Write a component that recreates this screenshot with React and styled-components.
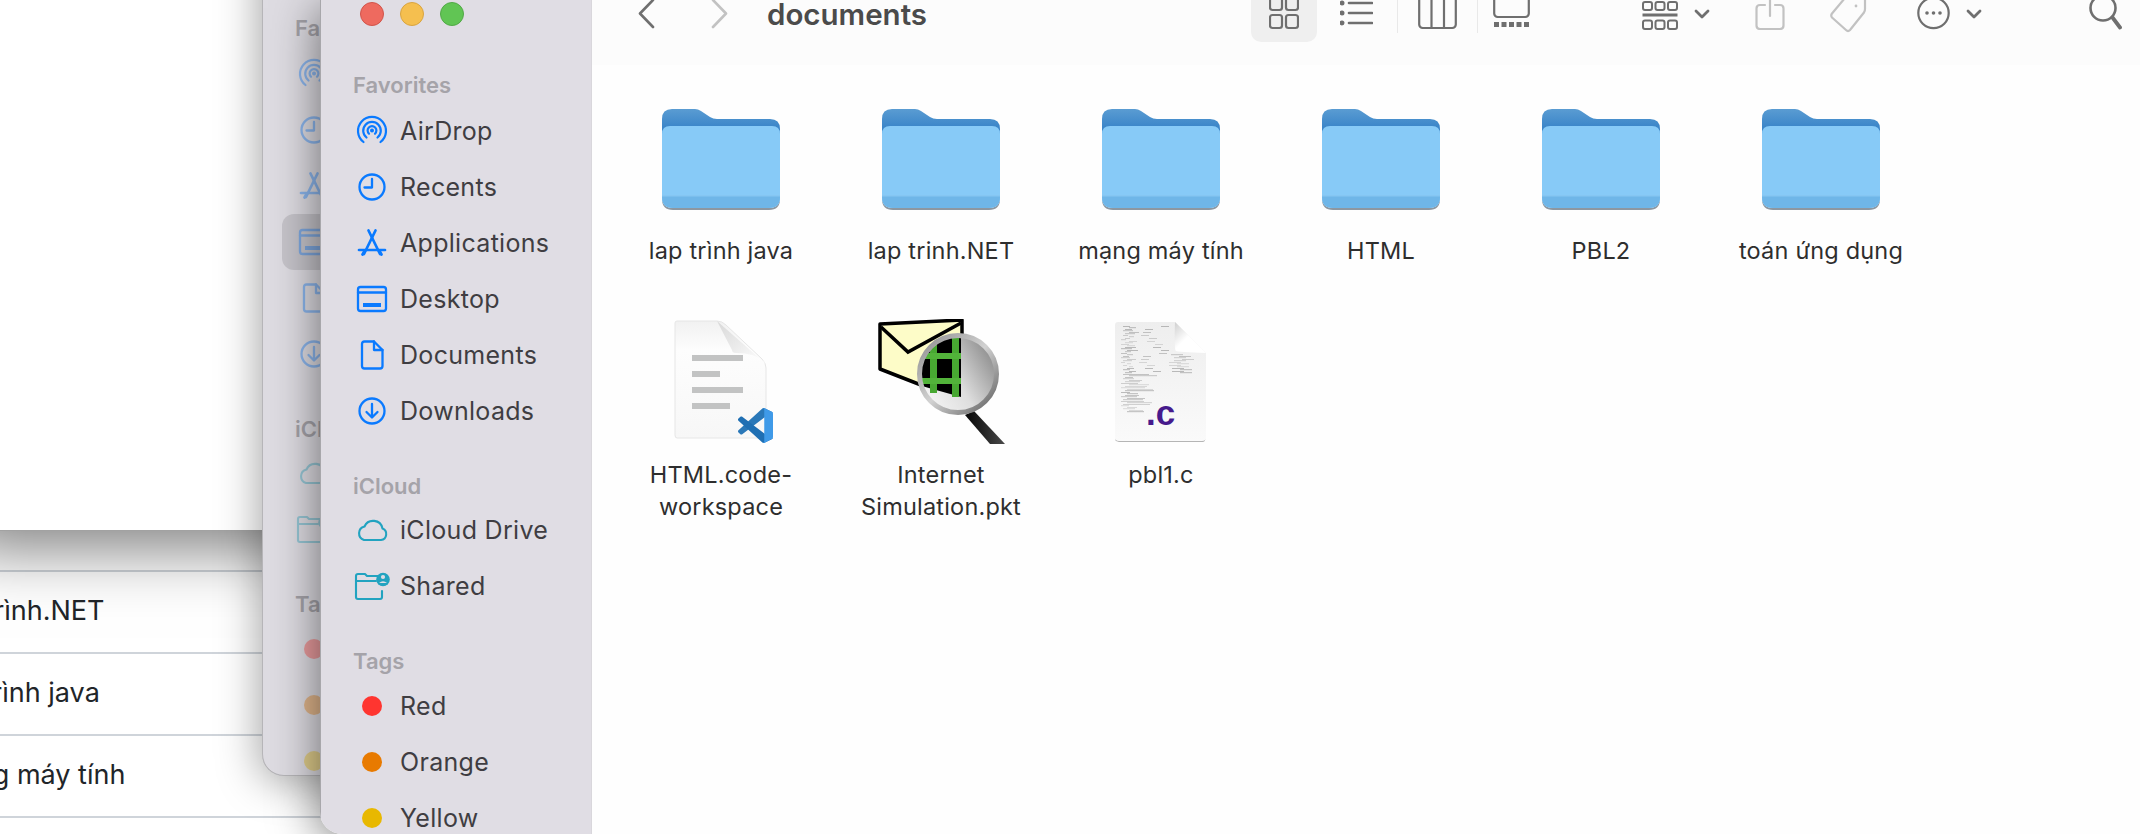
import React from 'react';
import styled, { createGlobalStyle } from 'styled-components';

const Global = createGlobalStyle`
  html, body { margin: 0; padding: 0; background: #fff; }
  body { font-family: Inter, "Noto Sans", "Liberation Sans", sans-serif; }
`;

const Desktop = styled.div`
  position: relative;
  width: 2140px;
  height: 834px;
  overflow: hidden;
  background: #fff;
`;

const TableWindow = styled.div`
  position: absolute;
  left: -300px;
  top: 500px;
  width: 1000px;
  height: 400px;
  background: #fff;
  padding-top: 70px;
  box-sizing: border-box;
`;

const TableRow = styled.div`
  height: 82px;
  box-sizing: border-box;
  border-top: 2px solid #cfd4da;
  display: flex;
  align-items: center;
  padding: 0 0 3px ${p => p.$indent}px;
  font-size: 27px;
  color: #212529;
`;

const PreviewWindow = styled.div`
  position: absolute;
  left: -40px;
  top: -40px;
  width: 400px;
  height: 570px;
  background: #fff;
  border-bottom: 1px solid #a2a2a2;
  box-shadow: 0 18px 60px rgba(0, 0, 0, 0.5);
`;

const BackWindow = styled.div`
  position: absolute;
  left: 262px;
  top: -57px;
  width: 320px;
  height: 833px;
  background: #dedce2;
  border-radius: 0 0 0 22px;
  box-sizing: border-box;
  box-shadow: inset 1px 0 0 #b6b5b8, inset 0 -1px 0 #b6b5b8, -4px 6px 42px rgba(0, 0, 0, 0.34);
`;

const FrontWindow = styled.div`
  position: absolute;
  left: 320px;
  top: 0;
  width: 1900px;
  height: 834px;
  display: flex;
  border-radius: 0 0 0 22px;
  overflow: hidden;
`;

const FrontShadow = styled.div`
  position: absolute;
  left: 320px;
  top: 0;
  width: 1900px;
  height: 834px;
  border-radius: 0 0 0 22px;
  box-shadow: -2px 8px 46px rgba(0, 0, 0, 0.5);
`;

const SidebarPane = styled.aside`
  width: 271px;
  flex: none;
  height: 100%;
  background: #e0dde4;
  box-shadow: inset 1px 0 0 #a8a7ab;
  color: #3f3d42;
`;

const Titlebar = styled.div`
  height: 38px;
  display: flex;
  gap: 16px;
  padding: 2px 0 0 40px;
  box-sizing: border-box;
`;

const Light = styled.span`
  width: 24px;
  height: 24px;
  border-radius: 50%;
  box-sizing: border-box;
  background: ${p => p.$fill};
  border: 1px solid ${p => p.$edge};
`;

const Section = styled.div`
  height: ${p => p.$h}px;
  box-sizing: border-box;
  padding: 35px 0 0 33px;
  font-size: 22px;
  line-height: 24px;
  font-weight: 600;
  color: #a5a3a9;
  overflow: hidden;
`;

const Spacer = styled.div`
  height: ${p => p.$h}px;
`;

const Item = styled.div`
  height: 56px;
  display: flex;
  align-items: center;
  margin-left: 20px;
  padding-left: 12px;
  border-radius: 12px;
  background: ${p => (p.$selected ? '#c6c4ca' : 'transparent')};
  font-size: 25px;
  letter-spacing: 0.3px;
  white-space: nowrap;
`;

const ItemIcon = styled.span`
  width: 40px;
  height: 32px;
  margin-right: 8px;
  flex: none;
  display: flex;
  align-items: center;
  justify-content: center;
  opacity: ${p => (p.$dim ? 0.38 : 1)};
`;

const ItemText = styled.span`
  opacity: ${p => (p.$dim ? 0.38 : 1)};
`;

const TagDot = styled.span`
  width: 20px;
  height: 20px;
  border-radius: 50%;
  background: ${p => p.$color};
`;

const Main = styled.main`
  width: 1549px;
  flex: none;
  height: 100%;
  background: #fefefe;
  border-left: 1px solid #d9d7dc;
  box-sizing: border-box;
`;

const Toolbar = styled.header`
  height: 65px;
  display: flex;
  align-items: flex-start;
  background: #fcfcfc;
  color: #6f6f6f;
`;

const Tool = styled.span`
  display: block;
  flex: none;
  margin-left: ${p => p.$ml}px;
  color: ${p => (p.$off ? '#c2c2c2' : '#6f6f6f')};
  height: ${p => p.$h || 30}px;
  svg { display: block; overflow: hidden; }
`;

const Title = styled.h1`
  margin: 0 0 0 39px;
  width: 161px;
  flex: none;
  font-size: 29.5px;
  line-height: 28px;
  font-weight: 600;
  color: #4b4b4b;
  white-space: nowrap;
`;

const ActiveView = styled.span`
  margin-left: 323px;
  width: 66px;
  height: 42px;
  flex: none;
  display: flex;
  justify-content: center;
  background: #efefef;
  border-radius: 0 0 10px 10px;
`;

const Divider = styled.span`
  width: 1px;
  height: 33px;
  flex: none;
  margin-left: ${p => p.$ml}px;
  background: #e9e9e9;
`;

const FileGrid = styled.section`
  display: grid;
  grid-template-columns: repeat(6, 220px);
  grid-auto-rows: 224px;
  padding: 29px 0 0 19px;
`;

const FileCell = styled.div`
  display: flex;
  flex-direction: column;
  align-items: center;
`;

const FileIcon = styled.div`
  height: 128px;
  display: flex;
  align-items: center;
  justify-content: center;
  svg { display: block; }
`;

const FileName = styled.div`
  margin-top: 13px;
  width: 200px;
  text-align: center;
  font-size: 23.5px;
  line-height: 32px;
  letter-spacing: 0.2px;
  color: #2e2e2e;
`;

const blue = '#0a7aff';
const teal = '#22a3c0';

const Ic = ({ children, color = blue, sw = 2.3 }) => (
  <svg width="32" height="32" viewBox="0 0 32 32" fill="none" stroke={color} strokeWidth={sw} strokeLinecap="round" strokeLinejoin="round">
    {children}
  </svg>
);

const AirDropIcon = () => (
  <Ic sw={2.2}>
    <path d="M7.5 27 A14 14 0 1 1 24.5 27" />
    <path d="M10.5 22.5 A8.8 8.8 0 1 1 21.5 22.5" />
    <path d="M13 18.7 A4.4 4.4 0 1 1 19 18.7" />
    <circle cx="16" cy="15.5" r="2" fill={blue} stroke="none" />
  </Ic>
);
const RecentsIcon = () => (
  <Ic>
    <circle cx="16" cy="16" r="12.5" />
    <path d="M16 8 V16.5 H8.5" />
  </Ic>
);
const AppsIcon = () => (
  <Ic sw={2.7}>
    <path d="M12.5 3.5 L24 27" />
    <path d="M19.5 3.5 L8 27" />
    <path d="M3 23 H29" />
    <path d="M6.5 27.5 L8.5 24" />
    <path d="M25.5 27.5 L23.5 24" />
  </Ic>
);
const DesktopIcon = () => (
  <Ic>
    <rect x="2" y="4" width="28" height="24" rx="2.5" />
    <path d="M2 9.5 H30" />
    <rect x="7" y="20" width="18" height="4" fill={blue} stroke="none" />
  </Ic>
);
const DocumentIcon = () => (
  <Ic>
    <path d="M6 5 Q6 2.5 8.5 2.5 H18 L26.500 11 V27 Q26.500 29.500 24 29.500 H8.500 Q6 29.500 6 27 Z" />
    <path d="M18 2.500 V11 H26.500" />
  </Ic>
);
const DownloadIcon = () => (
  <Ic>
    <circle cx="16" cy="16" r="12.5" />
    <path d="M16 9 V22 M10.500 17 L16 22.500 L21.500 17" />
  </Ic>
);
const CloudIcon = () => (
  <Ic color={teal} sw={2.1}>
    <path d="M8 26 H25 A6 6 0 0 0 26.500 14.500 A9.500 9.500 0 0 0 8.500 12.500 A7 7 0 0 0 8 26 Z" />
  </Ic>
);
const SharedIcon = () => (
  <svg width="36" height="32" viewBox="0 0 36 32" fill="none" stroke={teal} strokeWidth="2.1" strokeLinecap="round" strokeLinejoin="round">
    <path d="M24 6 H13 L11 4 H4 Q2 4 2 6 V27 Q2 29 4 29 H26 Q28 29 28 27 V21" />
    <path d="M2 11 H22" />
    <circle cx="29" cy="9.500" r="6.800" fill={teal} stroke="none" />
    <circle cx="29" cy="7" r="2.100" fill="#e0dde4" stroke="none" />
    <path d="M25 13 Q29 9.500 33 13 Z" fill="#e0dde4" stroke="none" />
  </svg>
);

const favorites = [
  ['AirDrop', AirDropIcon],
  ['Recents', RecentsIcon],
  ['Applications', AppsIcon],
  ['Desktop', DesktopIcon],
  ['Documents', DocumentIcon],
  ['Downloads', DownloadIcon],
];
const cloud = [
  ['iCloud Drive', CloudIcon],
  ['Shared', SharedIcon],
];
const tags = [
  ['Red', '#ff3530'],
  ['Orange', '#e87a00'],
  ['Yellow', '#e8b800'],
];

const Sidebar = ({ dim, selected }) => (
  <>
    <Section $h={65}>Favorites</Section>
    {favorites.map(([label, Icon]) => (
      <Item key={label} $selected={selected === label}>
        <ItemIcon $dim={dim}><Icon /></ItemIcon>
        <ItemText $dim={dim}>{label}</ItemText>
      </Item>
    ))}
    <Section $h={63}>iCloud</Section>
    {cloud.map(([label, Icon]) => (
      <Item key={label}>
        <ItemIcon $dim={dim}><Icon /></ItemIcon>
        <ItemText $dim={dim}>{label}</ItemText>
      </Item>
    ))}
    <Section $h={64}>Tags</Section>
    {tags.map(([label, color]) => (
      <Item key={label}>
        <ItemIcon $dim={dim}><TagDot $color={color} /></ItemIcon>
        <ItemText $dim={dim}>{label}</ItemText>
      </Item>
    ))}
  </>
);

const Stroke = ({ w, h, sw = 2.2, children }) => (
  <svg width={w} height={h} viewBox={`0 0 ${w} ${h}`} fill="none" stroke="currentColor" strokeWidth={sw} strokeLinecap="round" strokeLinejoin="round">
    {children}
  </svg>
);

const Cols = [1, 17];
const GridIcon = () => (
  <Stroke w={30} h={30}>
    {Cols.map(x => <rect key={x} x={x} y={-4} width={12} height={14} rx={2.500} />)}
    {Cols.map(x => <rect key={x} x={x} y={15} width={12} height={13} rx={2.500} />)}
  </Stroke>
);
const ListIcon = () => (
  <Stroke w={33} h={30} sw={2.6}>
    {[3, 13, 23].map(y => (
      <g key={y}>
        <circle cx={2} cy={y} r={1.200} />
        <path d={`M9 ${y} H32`} />
      </g>
    ))}
  </Stroke>
);
const ColumnIcon = () => (
  <Stroke w={39} h={30}>
    <rect x={1.200} y={-4} width={36.600} height={32} rx={3.500} />
    <path d="M13.500 -4 V28 M26 -4 V28" />
  </Stroke>
);
const GalleryIcon = () => (
  <Stroke w={37} h={30}>
    <rect x={1.200} y={-5} width={34.600} height={22} rx={3.500} />
    {[0, 1, 2, 3, 4].map(i => (
      <rect key={i} x={1 + i * 7.500} y={22} width={5} height={5} fill="currentColor" stroke="none" />
    ))}
  </Stroke>
);
const GroupIcon = () => {
  const xs = [1, 13.500, 26];
  return (
    <Stroke w={36} h={30} sw={2}>
      {xs.map(x => <rect key={x} x={x} y={2} width={9} height={8} rx={2} />)}
      <path d="M0.500 15 H35.500" strokeWidth={2.800} strokeLinecap="butt" />
      {xs.map(x => <rect key={x} x={x} y={20.500} width={9} height={8.500} rx={2} />)}
    </Stroke>
  );
};
const ChevronIcon = () => (
  <Stroke w={16} h={20} sw={2.800}>
    <path d="M2 11 L8 17 L14 11" />
  </Stroke>
);
const ShareIcon = () => (
  <Stroke w={30} h={30} sw={2.200}>
    <path d="M10 5 H5 Q1.500 5 1.500 8.500 V25.500 Q1.500 29 5 29 H25 Q28.500 29 28.500 25.500 V8.500 Q28.500 5 25 5 H20" />
    <path d="M15 -2 V16" />
  </Stroke>
);
const TagIcon = () => (
  <Stroke w={37} h={33} sw={2.200}>
    <path d="M2 13.500 L20 -8 H35 V9 Q35 11 34 12.500 L20 30 Q18 32 16 30 L2 17.500 Q0.500 15.500 2 13.500 Z" />
    <circle cx={26} cy={6} r={1.400} fill="currentColor" stroke="none" />
  </Stroke>
);
const MoreIcon = () => (
  <Stroke w={33} h={31} sw={2.200}>
    <circle cx={16.500} cy={13} r={15.200} />
    {[10, 16.500, 23].map(x => <circle key={x} cx={x} cy={13} r={1.800} fill="currentColor" stroke="none" />)}
  </Stroke>
);
const SearchIcon = () => (
  <Stroke w={33} h={30} sw={2.600}>
    <circle cx={14} cy={8} r={12.500} />
    <path d="M23.500 17.500 L31 27.500" strokeWidth={3.800} />
  </Stroke>
);

const Folder = () => (
  <svg width="120" height="104" viewBox="0 -2 120 104">
    <defs>
      <linearGradient id="folderBack" x1="0" y1="0" x2="0" y2="1">
        <stop offset="0" stopColor="#5a9cd2" />
        <stop offset="0.3" stopColor="#3c86c9" />
      </linearGradient>
    </defs>
    <path d="M1 89 Q1 100 12 100 H108 Q119 100 119 89 V91 Q119 102 108 102 H12 Q1 102 1 91 Z" fill="#8d97a1" />
    <path d="M1 11 Q1 1 11 1 H34 Q37 1 40 3 L49 9 Q52 11 56 11 H109 Q119 11 119 21 V60 H1 Z" fill="url(#folderBack)" />
    <path d="M1 26 Q1 18 9 18 H111 Q119 18 119 26 V89 Q119 100 108 100 H12 Q1 100 1 89 Z" fill="#87caf7" />
    <path d="M1 88 H119 V89 Q119 100 108 100 H12 Q1 100 1 89 Z" fill="#6fb6e8" />
    <rect x="1" y="87" width="118" height="1.500" fill="#86c6f2" />
  </svg>
);

const WorkspaceDoc = () => (
  <svg width="106" height="125" viewBox="-6 0 106 125">
    <defs>
      <linearGradient id="pageFill" x1="0" y1="0" x2="0" y2="1">
        <stop offset="0" stopColor="#f1f1f1" />
        <stop offset="0.25" stopColor="#fdfdfd" />
        <stop offset="1" stopColor="#f7f7f7" />
      </linearGradient>
      <linearGradient id="foldFill" x1="0" y1="0" x2="1" y2="1">
        <stop offset="0" stopColor="#d8d8d8" />
        <stop offset="1" stopColor="#ffffff" />
      </linearGradient>
    </defs>
    <path d="M1 3 Q1 1 3 1 H43 Q48 1 52 5 L88 39 Q92 43 92 48 V115 Q92 118 89 118 H3 Q1 118 1 115 Z" fill="url(#pageFill)" stroke="#e6e6e6" />
    <path d="M43 1 Q58 30 58 30 Q58 33 62 33 Q84 33 92 44 Z" fill="url(#foldFill)" />
    <rect x="18" y="35" width="51" height="6" fill="#c2c3c3" />
    <rect x="18" y="51" width="28" height="6" fill="#c2c3c3" />
    <rect x="18" y="67" width="51" height="6" fill="#c2c3c3" />
    <rect x="18" y="83" width="38" height="6" fill="#c2c3c3" />
    <g transform="translate(64 88) scale(0.35)">
      <path d="M96.460 10.800 L75.860 .900 C73.470 -.250 70.620 .240 68.750 2.110 L1.300 63.600 C-.510 65.250 -.510 68.100 1.300 69.750 L6.810 74.760 C8.300 76.110 10.530 76.210 12.130 75 L93.400 13.500 C96.130 11.430 100 13.380 100 16.800 V16.560 C100 14.160 98.630 11.980 96.460 10.800 Z" fill="#2a78b8" />
      <path d="M96.460 89.200 L75.860 99.100 C73.470 100.250 70.620 99.760 68.750 97.890 L1.300 36.400 C-.510 34.750 -.510 31.900 1.300 30.250 L6.810 25.240 C8.300 23.890 10.530 23.790 12.130 25 L93.400 86.500 C96.130 88.570 100 86.620 100 83.200 V83.440 C100 85.840 98.630 88.020 96.460 89.200 Z" fill="#1f6fb3" />
      <path d="M75.860 99.130 C73.470 100.280 70.620 99.790 68.750 97.920 C71.060 100.230 75 98.590 75 95.320 V4.680 C75 1.410 71.060 -.230 68.750 2.080 C70.620 .210 73.470 -.280 75.860 .870 L96.460 10.780 C98.620 11.820 100 14.010 100 16.420 V83.090 C100 85.490 98.620 87.690 96.460 88.730 Z" fill="#3f9ae8" />
    </g>
  </svg>
);

const PacketIcon = () => (
  <svg width="127" height="126" viewBox="0 0 127 126">
    <defs>
      <linearGradient id="lens" x1="0" y1="1" x2="1" y2="0.4">
        <stop offset="0" stopColor="#ffffff" />
        <stop offset="0.55" stopColor="#dedede" />
        <stop offset="1" stopColor="#8f8f8f" />
      </linearGradient>
      <linearGradient id="ring" x1="0" y1="0" x2="1" y2="1">
        <stop offset="0" stopColor="#8d8d8d" />
        <stop offset="0.5" stopColor="#d2d2d2" />
        <stop offset="1" stopColor="#5c5c5c" />
      </linearGradient>
      <linearGradient id="handle" x1="0" y1="0" x2="1" y2="0">
        <stop offset="0" stopColor="#050505" />
        <stop offset="1" stopColor="#4a4a4a" />
      </linearGradient>
      <clipPath id="lensClip"><circle cx="80" cy="55" r="38" /></clipPath>
    </defs>
    <path d="M2 5 L84 1 L84 82 L2 50 Z" fill="#fdfcc8" stroke="#000" strokeWidth="3.500" strokeLinejoin="round" />
    <path d="M3 8 L30 33 L83 4" fill="none" stroke="#000" strokeWidth="3.500" />
    <path d="M96 92 L127 125 V125 H112 L87 96 Z" fill="url(#handle)" />
    <g clipPath="url(#lensClip)">
      <rect x="38" y="14" width="84" height="84" fill="url(#lens)" />
      <path d="M38 14 H83 V78 L40 66 Z" fill="#000" />
      <rect x="52" y="14" width="7" height="60" fill="#48a832" />
      <rect x="74" y="14" width="7" height="64" fill="#48a832" />
      <rect x="38" y="34" width="45" height="6" fill="#52b33a" />
      <rect x="38" y="59" width="45" height="6" fill="#52b33a" />
    </g>
    <circle cx="80" cy="55" r="38.500" fill="none" stroke="url(#ring)" strokeWidth="5" />
  </svg>
);

const codeLines = Array.from({ length: 58 }, (_, i) => {
  const seed = (i * 37 + 11) % 29;
  const table = i < 32;
  return {
    x: 6 + (seed % 5) * 2,
    y: 5 + i * 1.500,
    w: table ? 4 + seed % 8 : 8 + (seed * 3) % 22,
    o: 0.3 + (seed % 4) * 0.1,
    mid: table && i % 2 === 0 ? 24 + (seed * 2) % 24 : null,
    far: table && i > 18 ? 54 + seed % 16 : null,
  };
});

const SourceFile = () => (
  <svg width="92" height="122" viewBox="0 0 92 122">
    <defs>
      <linearGradient id="srcPage" x1="0" y1="0" x2="0" y2="1">
        <stop offset="0" stopColor="#eeeeee" />
        <stop offset="1" stopColor="#fafafa" />
      </linearGradient>
      <linearGradient id="srcFold" x1="0" y1="0" x2="1" y2="1">
        <stop offset="0" stopColor="#cfcfcf" />
        <stop offset="0.45" stopColor="#ffffff" />
      </linearGradient>
    </defs>
    <path d="M1 120 Q0 120 1 117 H90 Q91 120 88 121 H4 Z" fill="#b5b5b5" />
    <path d="M0 4 Q0 1 3 1 H60 L91 32 V116 Q91 120 87 120 H4 Q0 120 0 116 Z" fill="url(#srcPage)" />
    {codeLines.map((l, i) => (
      <g key={i} fill="#555">
        <rect x={l.x} y={l.y} width={l.w} height={0.6} opacity={l.o} />
        {l.mid && <rect x={l.mid} y={l.y} width={8} height={0.6} opacity={l.o} />}
        {l.far && <rect x={l.far} y={l.y} width={12} height={0.6} opacity={l.o} />}
      </g>
    ))}
    <path d="M60 1 Q59 30 61 30 Q63 31 91 32 Z" fill="url(#srcFold)" />
    <text x="31" y="104" fontFamily="'Liberation Sans', sans-serif" fontWeight="700" fontSize="35" fill="#461a8c">.c</text>
  </svg>
);

const files = [
  ['lap trình java', Folder],
  ['lap trinh.NET', Folder],
  ['mạng máy tính', Folder],
  ['HTML', Folder],
  ['PBL2', Folder],
  ['toán ứng dụng', Folder],
  ['HTML.code-workspace', WorkspaceDoc],
  ['Internet Simulation.pkt', PacketIcon],
  ['pbl1.c', SourceFile],
];

export default function App() {
  return (
    <Desktop>
      <Global />
      <TableWindow>
        <TableRow $indent={239}>lập trình.NET</TableRow>
        <TableRow $indent={237}>lập trình java</TableRow>
        <TableRow $indent={238}>mạng máy tính</TableRow>
        <TableRow $indent={238} />
      </TableWindow>
      <PreviewWindow />
      <BackWindow>
        <Spacer $h={38} />
        <Sidebar dim selected="Desktop" />
      </BackWindow>
      <FrontShadow />
      <FrontWindow>
        <SidebarPane>
          <Titlebar>
            <Light $fill="#ee6a5f" $edge="#d1544a" />
            <Light $fill="#f5bf4f" $edge="#d9a440" />
            <Light $fill="#61c554" $edge="#52a947" />
          </Titlebar>
          <Sidebar />
        </SidebarPane>
        <Main>
          <Toolbar>
            <Tool $ml={46}>
              <Stroke w={17} h={30} sw={2.600}><path d="M15 0 L2 13.500 L15 27" /></Stroke>
            </Tool>
            <Tool $ml={56} $off>
              <Stroke w={17} h={30} sw={2.600}><path d="M2 0 L15 13.500 L2 27" /></Stroke>
            </Tool>
            <Title>documents</Title>
            <ActiveView><Tool $ml={0}><GridIcon /></Tool></ActiveView>
            <Tool $ml={23}><ListIcon /></Tool>
            <Divider $ml={24} />
            <Tool $ml={20}><ColumnIcon /></Tool>
            <Divider $ml={20} />
            <Tool $ml={15}><GalleryIcon /></Tool>
            <Tool $ml={112}><GroupIcon /></Tool>
            <Tool $ml={16}><ChevronIcon /></Tool>
            <Tool $ml={45} $off><ShareIcon /></Tool>
            <Tool $ml={45} $off $h={33}><TagIcon /></Tool>
            <Tool $ml={50} $h={31}><MoreIcon /></Tool>
            <Tool $ml={16}><ChevronIcon /></Tool>
            <Tool $ml={107}><SearchIcon /></Tool>
          </Toolbar>
          <FileGrid>
            {files.map(([name, Icon]) => (
              <FileCell key={name}>
                <FileIcon><Icon /></FileIcon>
                <FileName>{name}</FileName>
              </FileCell>
            ))}
          </FileGrid>
        </Main>
      </FrontWindow>
    </Desktop>
  );
}
